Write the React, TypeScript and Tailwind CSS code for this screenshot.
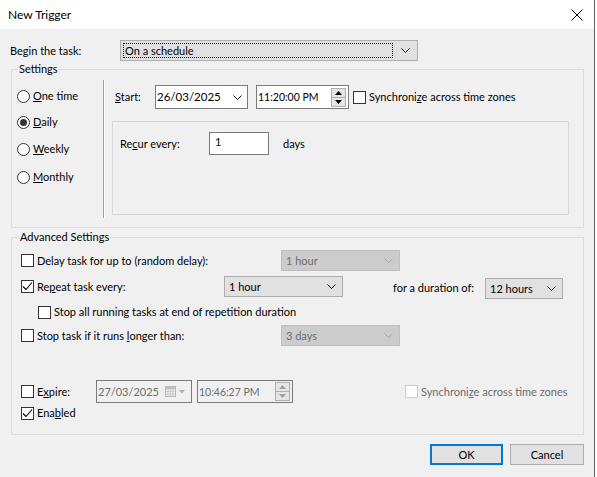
import React from "react";

function Check({ checked = false, disabled = false }: { checked?: boolean; disabled?: boolean }) {
  return (
    <span
      className={
        disabled
          ? "w-[13px] h-[13px] shrink-0 border border-[#cccccc] bg-white flex items-center justify-center"
          : "w-[13px] h-[13px] shrink-0 border border-[#333333] bg-white flex items-center justify-center"
      }
    >
      {checked && (
        <svg width="11" height="11" viewBox="0 0 11 11">
          <path d="M1 5.5 L4 8.5 L10 1.5" fill="none" stroke="#000" strokeWidth="1.1" />
        </svg>
      )}
    </span>
  );
}

function Radio({ checked = false }: { checked?: boolean }) {
  return (
    <span className="w-[13px] h-[13px] shrink-0 rounded-full border border-[#333333] bg-white flex items-center justify-center">
      {checked && <span className="w-[7px] h-[7px] rounded-full bg-[#333333]" />}
    </span>
  );
}

function Chevron({ color = "#000" }: { color?: string }) {
  return (
    <svg width="9" height="5" viewBox="0 0 9 5">
      <path d="M0.5 0.5 L4.5 4.5 L8.5 0.5" fill="none" stroke={color} strokeWidth="1" />
    </svg>
  );
}

function Spinner({ disabled = false }: { disabled?: boolean }) {
  const c = disabled ? "#a0a0a0" : "#000";
  return (
    <span className="flex flex-col w-[15px] h-[19px] shrink-0">
      <span className="h-[10px] border border-[#adadad] bg-[#e5e5e5] flex items-center justify-center">
        <svg width="7" height="4" viewBox="0 0 7 4">
          <path d="M0 4 L3.5 0 L7 4 Z" fill={c} />
        </svg>
      </span>
      <span className="h-[9px] border border-t-0 border-[#adadad] bg-[#e5e5e5] flex items-center justify-center">
        <svg width="7" height="4" viewBox="0 0 7 4">
          <path d="M0 0 L3.5 4 L7 0 Z" fill={c} />
        </svg>
      </span>
    </span>
  );
}

function Combo({ text, disabled = false, className }: { text: string; disabled?: boolean; className: string }) {
  return (
    <div
      className={
        (disabled
          ? "border border-[#bfbfbf] bg-[#cccccc] text-[#6d6d6d] "
          : "border border-[#adadad] bg-[#e1e1e1] text-black ") +
        "flex items-center justify-between pl-[4px] pr-[6px] shrink-0 " +
        className
      }
    >
      <span className="leading-[16px]">{text}</span>
      <Chevron color={disabled ? "#a8a8a8" : "#000"} />
    </div>
  );
}

export default function App() {
  return (
    <div className="w-[597px] h-[477px] bg-white flex font-['Lato',sans-serif] text-[11px] leading-[16px] text-black">
      <div className="w-[595px] h-full border-r border-[#5f5f5f] flex flex-col bg-[#f0f0f0]">
        {/* title bar */}
        <div className="h-[29px] bg-white flex items-center justify-between pl-[8px] pr-[11px] shrink-0">
          <span className="text-[12px]">New Trigger</span>
          <svg width="12" height="12" viewBox="0 0 12 12">
            <path d="M0.5 0.5 L11.5 11.5 M11.5 0.5 L0.5 11.5" stroke="#000" strokeWidth="1" />
          </svg>
        </div>

        {/* begin the task */}
        <div className="mt-[11px] ml-[10px] flex items-center h-[21px]">
          <span className="w-[110px]">Begin the task:</span>
          <div className="w-[298px] h-[21px] border border-[#adadad] bg-[#e1e1e1] flex items-center pl-[2px] pr-[7px]">
            <div className="flex-1 h-[15px] border border-dotted border-black flex items-center pl-[1px] mr-[8px]">
              <span>On a schedule</span>
            </div>
            <Chevron />
          </div>
        </div>

        {/* Settings */}
        <fieldset className="mt-[1px] ml-[11px] w-[573px] border border-[#dcdcdc]">
          <legend className="ml-[6px] px-[1px] leading-[14px]">Settings</legend>
          <div className="flex h-[151px]">
            <div className="w-[91px] pl-[5px] flex flex-col">
              <div className="mt-[12px] h-[16px] flex items-center gap-[3px]">
                <Radio />
                <span>
                  <u>O</u>ne time
                </span>
              </div>
              <div className="mt-[10px] h-[16px] flex items-center gap-[3px]">
                <Radio checked />
                <span>
                  <u>D</u>aily
                </span>
              </div>
              <div className="mt-[11px] h-[16px] flex items-center gap-[3px]">
                <Radio />
                <span>
                  <u>W</u>eekly
                </span>
              </div>
              <div className="mt-[12px] h-[16px] flex items-center gap-[3px]">
                <Radio />
                <span>
                  <u>M</u>onthly
                </span>
              </div>
            </div>
            <div className="mt-[4px] h-[138px] w-[2px] border-l border-[#a0a0a0] border-r border-r-white" />
            <div className="flex flex-col">
              <div className="mt-[9px] h-[24px] flex items-center pl-[10px]">
                <span className="w-[40px]">
                  <u>S</u>tart:
                </span>
                <div className="w-[93px] h-[24px] border border-[#7a7a7a] bg-white flex items-center justify-between pl-[1px] pr-[5px]">
                  <span className="text-[11.5px]">26/03/2025</span>
                  <Chevron />
                </div>
                <div className="ml-[8px] w-[93px] h-[24px] border border-[#7a7a7a] bg-white flex items-center justify-between pl-[1px] pr-[2px]">
                  <span className="text-[10.5px]">11:20:00 PM</span>
                  <Spinner />
                </div>
                <span className="ml-[4px]">
                  <Check />
                </span>
                <span className="ml-[3px]">
                  Synchroni<u>z</u>e across time zones
                </span>
              </div>
              <div className="mt-[12px] ml-[7px] w-[457px] h-[94px] border border-[#d9d9d9] pl-[7px] pt-[10px]">
                <div className="flex items-center h-[23px]">
                  <span className="w-[89px]">
                    Re<u>c</u>ur every:
                  </span>
                  <div className="w-[60px] h-[23px] border border-[#7a7a7a] bg-white pl-[5px] pt-[1px]">1</div>
                  <span className="ml-[14px]">days</span>
                </div>
              </div>
            </div>
          </div>
        </fieldset>

        {/* Advanced Settings */}
        <fieldset className="mt-[2px] ml-[11px] w-[573px] border border-[#dcdcdc]">
          <legend className="ml-[7px] px-[1px] leading-[14px]">Advanced Settings</legend>
          <div className="flex flex-col pl-[9px] pb-[13px]">
            <div className="mt-[6px] h-[21px] flex items-center">
              <div className="w-[260px] flex items-center gap-[3px]">
                <Check />
                <span>Delay task for up to (random delay):</span>
              </div>
              <Combo text="1 hour" disabled className="w-[119px] h-[21px]" />
            </div>
            <div className="mt-[5px] h-[21px] flex items-start">
              <div className="w-[203px] h-[21px] flex items-center gap-[3px]">
                <Check checked />
                <span>
                  Re<u>p</u>eat task every:
                </span>
              </div>
              <Combo text="1 hour" className="w-[119px] h-[21px]" />
              <span className="ml-[50px] w-[92px] h-[21px] flex items-center pt-[3px]">for a duration of:</span>
              <Combo text="12 hours" className="w-[78px] h-[21px] mt-[2px]" />
            </div>
            <div className="mt-[7px] h-[16px] pl-[17px] flex items-center gap-[3px]">
              <Check />
              <span>
                Stop all running tasks at end of repetition durat<u>i</u>on
              </span>
            </div>
            <div className="mt-[5px] h-[21px] flex items-center">
              <div className="w-[260px] flex items-center gap-[3px]">
                <Check />
                <span>
                  Stop task if it runs <u>l</u>onger than:
                </span>
              </div>
              <Combo text="3 days" disabled className="w-[119px] h-[21px]" />
            </div>
            <div className="mt-[34px] h-[23px] flex items-center">
              <div className="w-[75px] flex items-center gap-[3px]">
                <Check />
                <span>
                  E<u>x</u>pire:
                </span>
              </div>
              <div className="w-[96px] h-[23px] border border-[#7a7a7a] bg-[#f0f0f0] text-[#6d6d6d] flex items-center justify-between pl-[1px] pr-[6px]">
                <span className="text-[11px]">27/03/2025</span>
                <span className="flex items-center gap-[3px]">
                  <svg width="11" height="11" viewBox="0 0 11 11">
                    <rect x="0.5" y="0.5" width="10" height="10" fill="#f4f4f4" stroke="#b4b4b4" />
                    <path d="M0.5 3 H10.5 M0.5 5.5 H10.5 M0.5 8 H10.5 M3 3 V10.5 M5.5 3 V10.5 M8 3 V10.5" stroke="#c8c8c8" strokeWidth="1" />
                    <rect x="0.5" y="0.5" width="10" height="2.5" fill="#c0c0c0" />
                  </svg>
                  <svg width="6" height="4" viewBox="0 0 6 4">
                    <path d="M0 0 L3 3.5 L6 0 Z" fill="#b0b0b0" />
                  </svg>
                </span>
              </div>
              <div className="ml-[5px] w-[96px] h-[23px] border border-[#7a7a7a] bg-[#f0f0f0] text-[#6d6d6d] flex items-center justify-between pl-[1px] pr-[2px]">
                <span className="text-[10.5px]">10:46:27 PM</span>
                <Spinner disabled />
              </div>
              <span className="ml-[112px]">
                <Check disabled />
              </span>
              <span className="ml-[3px] text-[#6d6d6d]">
                Synchroni<u>z</u>e across time zones
              </span>
            </div>
            <div className="mt-[2px] h-[16px] flex items-center gap-[3px]">
              <Check checked />
              <span>
                Ena<u>b</u>led
              </span>
            </div>
          </div>
        </fieldset>

        {/* buttons */}
        <div className="mt-[9px] flex justify-end pr-[10px] gap-[7px]">
          <button className="w-[73px] h-[21px] border-2 border-[#0078d7] bg-[#e1e1e1] flex items-center justify-center">
            OK
          </button>
          <button className="w-[74px] h-[21px] border border-[#adadad] bg-[#e1e1e1] flex items-center justify-center">
            Cancel
          </button>
        </div>
      </div>
    </div>
  );
}
